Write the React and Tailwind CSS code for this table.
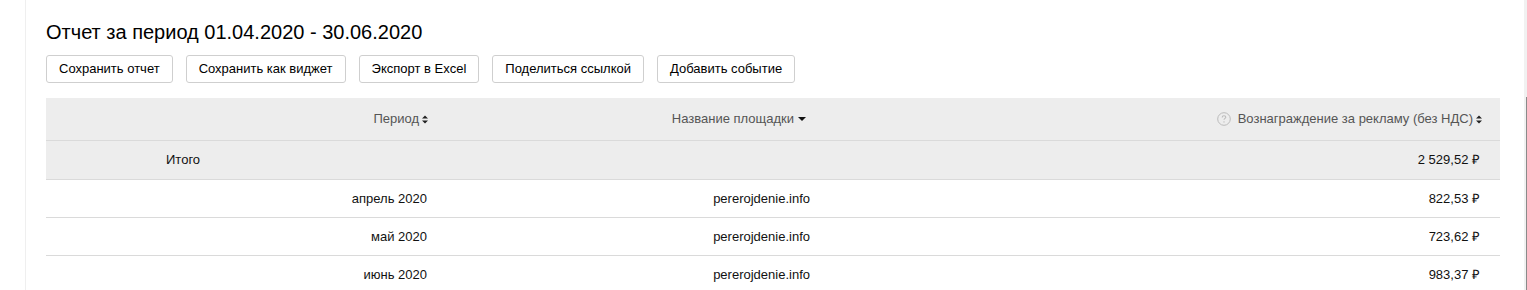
const rows = [
  { period: "апрель 2020", site: "pererojdenie.info", sum: "822,53 ₽" },
  { period: "май 2020", site: "pererojdenie.info", sum: "723,62 ₽" },
  { period: "июнь 2020", site: "pererojdenie.info", sum: "983,37 ₽" },
];

const buttons = [
  "Сохранить отчет",
  "Сохранить как виджет",
  "Экспорт в Excel",
  "Поделиться ссылкой",
  "Добавить событие",
];

function SortIcon() {
  return (
    <svg width="6" height="9" viewBox="0 0 6 9" className="ml-[3px] inline-block">
      <path d="M0 3.5 L3 0.5 L6 3.5 Z M0 5.5 L3 8.5 L6 5.5 Z" fill="#222" />
    </svg>
  );
}

function CaretDown() {
  return (
    <svg width="8" height="4" viewBox="0 0 8 4" className="ml-[4px] inline-block">
      <path d="M0 0 L8 0 L4 4 Z" fill="#111" />
    </svg>
  );
}

function HelpIcon() {
  return (
    <svg width="14" height="14" viewBox="0 0 14 14" className="mr-[7px] inline-block">
      <circle cx="7" cy="7" r="6.3" fill="none" stroke="#bbb" strokeWidth="1" />
      <path d="M5.2 5.4 C5.2 4.3 6 3.7 7 3.7 C8 3.7 8.8 4.3 8.8 5.2 C8.8 6.3 7 6.4 7 7.8" fill="none" stroke="#bbb" strokeWidth="1.1" />
      <circle cx="7" cy="9.9" r="0.7" fill="#bbb" />
    </svg>
  );
}

export default function App() {
  return (
    <div className="flex w-[1527px] h-[290px] overflow-hidden bg-white text-[13px] text-[#111]" style={{ fontFamily: '"Liberation Sans", Arial, sans-serif' }}>
      <div className="w-[26px] shrink-0 border-r border-[#efefef]" />
      <div className="flex-1 pl-[20px] pr-[24px] pt-[20px]">
        <h1 className="text-[20px] leading-[24px] text-black">Отчет за период 01.04.2020 - 30.06.2020</h1>
        <div className="flex gap-[13px] mt-[11px]">
          {buttons.map((b) => (
            <button key={b} className="h-[28px] px-[12px] border border-[#cfcfcf] rounded-[3px] bg-white text-[13px] text-black">
              {b}
            </button>
          ))}
        </div>
        <div className="mt-[15px] w-[1454px]">
          <div className="grid grid-cols-[392px_382px_1fr] h-[43px] bg-[#ededed] border-b border-[#dadada] items-center text-[#555]">
            <div className="flex items-center justify-end pr-[10px]">Период<SortIcon /></div>
            <div className="flex items-center justify-end pr-[14px]">Название площадки<CaretDown /></div>
            <div className="flex items-center justify-end pr-[18px]"><HelpIcon />Вознаграждение за рекламу (без НДС)<SortIcon /></div>
          </div>
          <div className="grid grid-cols-[392px_382px_1fr] h-[39px] bg-[#ededed] border-b border-[#dadada] items-center">
            <div className="pl-[120px]">Итого</div>
            <div />
            <div className="text-right pr-[20px]">2 529,52 ₽</div>
          </div>
          {rows.map((r) => (
            <div key={r.period} className="grid grid-cols-[392px_382px_1fr] h-[38px] border-b border-[#dadada] items-center">
              <div className="text-right pr-[11px]">{r.period}</div>
              <div className="text-right pr-[10px]">{r.site}</div>
              <div className="text-right pr-[20px]">{r.sum}</div>
            </div>
          ))}
        </div>
      </div>
      <div className="w-[3px] shrink-0 bg-[#f1f1f1] flex flex-col">
        <div className="h-[97px]" />
        <div className="flex-1 ml-[2px] w-[1px] bg-[#8a8a8a]" />
      </div>
    </div>
  );
}
